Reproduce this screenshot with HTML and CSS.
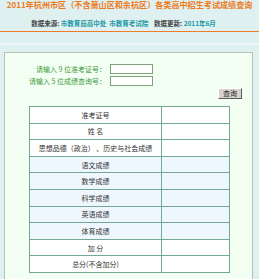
FILE: index.html
```html
<!DOCTYPE html>
<html lang="zh-CN">
<head>
    <meta charset="UTF-8">
    <title>2011年杭州市区各类高中招生考试成绩查询</title>
    <link rel="stylesheet" href="styles.css">
</head>
<body>
    <div class="header">
        <h1 class="title">2011年杭州市区（不含萧山区和余杭区）各类高中招生考试成绩查询</h1>
        <p class="source">
            <b>数据来源:</b> <span class="val">市教育局高中处</span>&nbsp; <span class="val">市教育考试院</span>&nbsp;&nbsp;&nbsp;
            <b>数据更新:</b> <span class="val">2011年6月</span>
        </p>
    </div>
    <div class="band"></div>

    <div class="box">
        <form class="query" onsubmit="return false">
            <label for="zkz">请输入 9 位准考证号：</label>
            <input type="text" id="zkz" class="field">
            <label for="cxh">请输入 5 位成绩查询号：</label>
            <input type="text" id="cxh" class="field">
        </form>
        <div class="actions">
            <button type="button" class="btn">查询</button>
        </div>

        <table class="scores">
            <tr><td class="name">准考证号</td><td></td></tr>
            <tr><td class="name">姓 名</td><td></td></tr>
            <tr><td class="name">思想品德（政治） 、历史与社会成绩</td><td></td></tr>
            <tr class="alt"><td class="name">语文成绩</td><td></td></tr>
            <tr class="alt"><td class="name">数学成绩</td><td></td></tr>
            <tr class="alt"><td class="name">科学成绩</td><td></td></tr>
            <tr class="alt"><td class="name">英语成绩</td><td></td></tr>
            <tr class="alt"><td class="name">体育成绩</td><td></td></tr>
            <tr><td class="name">加 分</td><td></td></tr>
            <tr><td class="name">总分(不含加分)</td><td></td></tr>
        </table>
    </div>
</body>
</html>
```

FILE: styles.css
```css
body {
    margin: 0;
    background: #dff0f0;
    font-family: "Noto Sans CJK SC", "DejaVu Sans", sans-serif;
}

.header {
    height: 31px;
    border-bottom: 1px solid #f07a28;
    text-align: center;
}

.title {
    margin: 0;
    font-size: 8.1px;
    line-height: 9px;
    font-weight: bold;
    color: #ef7a1a;
    white-space: nowrap;
}

.source {
    margin: 10px 0 0;
    padding-right: 12px;
    font-size: 6.5px;
    line-height: 8px;
    color: #444;
    white-space: nowrap;
}

.source .val {
    color: #1c9aa6;
    font-weight: bold;
}

.band {
    height: 20px;
    background: linear-gradient(to bottom, #dff0f0 11px, #eef8f8 11px, #eef8f8 13px, #dff0f0 13px);
}

.box {
    margin: 0 6px 0 4px;
    height: 215px;
    border: 1px solid #b7c2b7;
    border-bottom: none;
    background: #f3fff3;
    padding-top: 11px;
}

.query {
    display: grid;
    grid-template-columns: 101px 43px;
    column-gap: 4px;
    row-gap: 2px;
    align-items: center;
}

.query label {
    text-align: right;
    font-size: 7px;
    line-height: 10px;
    color: #3c9a3c;
    white-space: nowrap;
}

.field {
    box-sizing: border-box;
    width: 43px;
    height: 10px;
    margin: 0;
    padding: 0;
    border: 1px solid #7fa27a;
    background: #fff;
}

.actions {
    display: flex;
    justify-content: flex-end;
    padding: 2px 10px 0 0;
}

.btn {
    box-sizing: border-box;
    width: 24px;
    height: 11px;
    padding: 0;
    font-family: inherit;
    font-size: 7px;
    line-height: 9px;
    color: #222;
    background: #d6d3cc;
    border: 1px solid;
    border-color: #fff #5a5a5a #5a5a5a #fff;
}

.scores {
    margin: 7px 0 0 24px;
    width: 201px;
    border-collapse: collapse;
    background: #fff;
}

.scores td {
    border: 1px solid #72a894;
    height: 15.6px;
    padding: 0;
    font-size: 7px;
    line-height: 8px;
    color: #333;
}

.scores td.name {
    width: 131px;
    text-align: center;
    white-space: nowrap;
}

.scores tr.alt td {
    background: #eef6fe;
}
```
